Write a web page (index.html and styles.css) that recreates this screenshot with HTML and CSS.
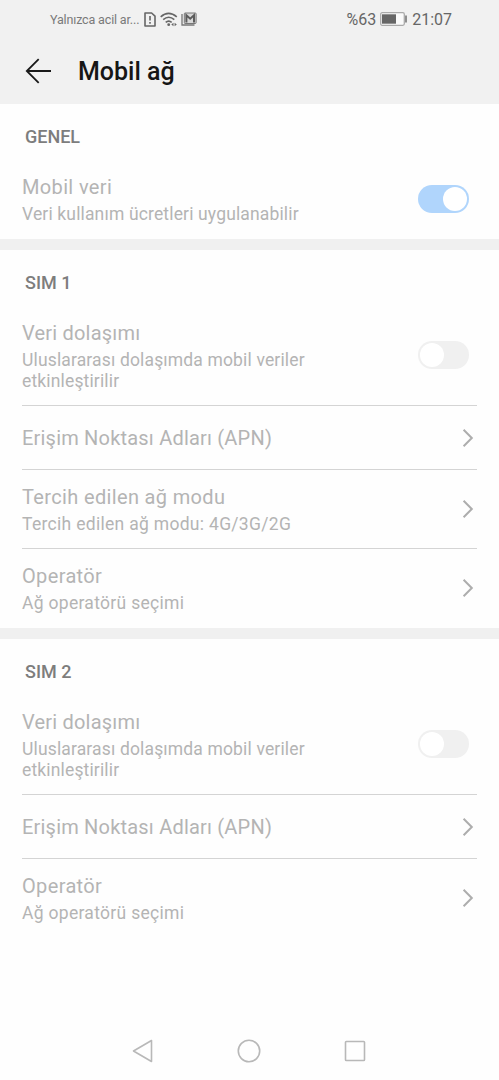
FILE: index.html
```html
<!DOCTYPE html>
<html lang="tr">
<head>
<meta charset="utf-8">
<title>Mobil ağ</title>
<link rel="stylesheet" href="styles.css">
</head>
<body>
<svg class="defs" width="0" height="0"><symbol id="chevron" viewBox="0 0 12 20"><path d="M1.600 1.800 9.800 10 1.600 18.200" fill="none" stroke="currentColor" stroke-width="2"/></symbol></svg>
<div class="screen">
  <header class="top">
    <div class="status">
      <span class="carrier">Yalnızca acil ar...</span>
      <svg class="sim" width="12" height="15" viewBox="0 0 12 15"><path d="M1 1h6.600L11 4.200V14H1z" fill="none" stroke="#666" stroke-width="1.600" stroke-linejoin="round"/><path d="M6 4v4.600M6 10v1.700" stroke="#666" stroke-width="1.600"/></svg>
      <svg class="wifi" width="18" height="15" viewBox="0 0 18 15"><g fill="none" stroke="#666" stroke-width="1.600"><path d="M.7 4.800Q8.500-2.200 16.800 4.800M3.200 7.700Q8.700 2.800 14.300 7.700M5.700 10.400Q8.700 7.800 11.700 10.400"/></g><circle cx="8.700" cy="12.700" r="1.400" fill="#666"/><path d="M11.300 12.500l2.200-1.700v3.400zM16.800 12.500l-2.200-1.700v3.400z" fill="#666"/></svg>
      <svg class="mail" width="16" height="14" viewBox="0 0 16 14"><path d="M1 2v11h12.500" fill="none" stroke="#777" stroke-width="1.300"/><rect x="3.300" y="1" width="11.800" height="10.500" rx=".8" fill="#d8d8d8" stroke="#777" stroke-width="1"/><path d="M5.400 10.500V3.300l3.800 3.400L13 3.300v7.200" fill="none" stroke="#5c5c5c" stroke-width="2"/></svg>
      <span class="percent">%63</span>
      <svg class="battery" width="28" height="14" viewBox="0 0 28 14"><rect x=".7" y=".7" width="23.600" height="12.600" rx="1.500" fill="#fafafa" stroke="#aaa" stroke-width="1.300"/><path d="M2 2.300h14v9.400H2z" fill="#666"/><path d="M26 3.500v7" stroke="#777" stroke-width="1.600"/></svg>
      <span class="clock">21:07</span>
    </div>
    <div class="bar">
      <svg class="back" width="27" height="26" viewBox="0 0 27 26"><path d="M26 13H2M13.700 1.200 1.800 13l11.900 11.800" fill="none" stroke="#1a1a1a" stroke-width="1.800"/></svg>
      <h1>Mobil ağ</h1>
    </div>
  </header>
  <main>
    <section>
      <h2>GENEL</h2>
      <div class="row"><div class="label"><p class="name wide">Mobil veri</p><p class="note tight">Veri kullanım ücretleri uygulanabilir</p></div><span class="switch on"></span></div>
    </section>
    <section>
      <h2>SIM 1</h2>
      <div class="row"><div class="label"><p class="name">Veri dolaşımı</p><p class="note tight">Uluslararası dolaşımda mobil veriler<br>etkinleştirilir</p></div><span class="switch"></span></div>
      <div class="row single"><div class="label"><p class="name">Erişim Noktası Adları (APN)</p></div><svg class="chev"><use href="#chevron"/></svg></div>
      <div class="row"><div class="label"><p class="name wide">Tercih edilen ağ modu</p><p class="note wide">Tercih edilen ağ modu: 4G/3G/2G</p></div><svg class="chev"><use href="#chevron"/></svg></div>
      <div class="row"><div class="label"><p class="name wide">Operatör</p><p class="note wide">Ağ operatörü seçimi</p></div><svg class="chev"><use href="#chevron"/></svg></div>
    </section>
    <section>
      <h2>SIM 2</h2>
      <div class="row"><div class="label"><p class="name">Veri dolaşımı</p><p class="note tight">Uluslararası dolaşımda mobil veriler<br>etkinleştirilir</p></div><span class="switch"></span></div>
      <div class="row single"><div class="label"><p class="name">Erişim Noktası Adları (APN)</p></div><svg class="chev"><use href="#chevron"/></svg></div>
      <div class="row"><div class="label"><p class="name wide">Operatör</p><p class="note wide">Ağ operatörü seçimi</p></div><svg class="chev"><use href="#chevron"/></svg></div>
    </section>
  </main>
  <nav>
    <svg width="24" height="24" viewBox="0 0 24 24"><path d="M20.500 1.500v21L2.500 12z"/></svg>
    <svg width="24" height="24" viewBox="0 0 24 24"><circle cx="12" cy="12" r="10.700"/></svg>
    <svg width="24" height="24" viewBox="0 0 24 24"><rect x="2.500" y="2.500" width="19" height="19" rx=".8"/></svg>
  </nav>
</div>
</body>
</html>
```
FILE: styles.css
```css
* { box-sizing: border-box; }
body { margin: 0; background: #fefefe; font-family: Roboto, "Noto Sans", sans-serif; }
h1, h2, p { margin: 0; }
.defs { display: block; }
.screen { width: 499px; height: 1080px; display: flex; flex-direction: column; overflow: hidden; }
.top { height: 104px; background: #f1f1f1; }
.status { height: 38px; display: flex; align-items: center; padding: 0 47px 0 50px; color: #666; white-space: nowrap; }
.status svg { flex: none; }
.carrier { font-size: 12.5px; letter-spacing: -.15px; color: #7a7a7a; width: 94px; }
.wifi { margin-left: 4px; }
.mail { margin-left: 3px; }
.percent { margin-left: auto; font-size: 16px; }
.battery { margin: 0 4px; }
.clock { font-size: 16px; }
.bar { height: 66px; display: flex; align-items: center; padding: 0 0 1px 25px; }
h1 { margin: 3px 0 0 26px; font-size: 25px; font-weight: 500; line-height: 30px; color: #161616; }
section + section { border-top: 11px solid #f0f0f0; }
h2 { height: 56px; padding: 9px 0 0 25px; display: flex; align-items: center; font-size: 18px; font-weight: 500; color: #7d7d7d; }
.row { margin: 0 22px; padding: 15px 0 16px; display: flex; align-items: center; justify-content: space-between; border-bottom: 1px solid #d4d4d4; }
.row:last-child { border-bottom: 0; padding-bottom: 17px; }
.single { height: 64px; padding-top: 16px; padding-bottom: 15px; }
.name { font-size: 20px; line-height: 25px; color: #b4b4b4; letter-spacing: .2px; }
.name + .note { padding-top: 4px; margin-bottom: -3px; }
.note { font-size: 17.5px; line-height: 21px; color: #b4b4b4; letter-spacing: .2px; }
.name.wide { letter-spacing: .35px; }
.note.wide { letter-spacing: .3px; }
.note.tight { letter-spacing: .15px; }
.switch { width: 51px; height: 28px; margin-right: 8px; padding: 2px; border-radius: 14px; background: #f0f0f0; display: flex; flex: none; }
.switch::before { content: ""; width: 24px; height: 24px; border-radius: 50%; background: #fff; }
.on { background: #b0d5fc; justify-content: flex-end; }
.chev { width: 12px; height: 20px; flex: none; margin-right: 3px; color: #adadad; }
nav { margin-top: auto; height: 59px; display: flex; justify-content: center; gap: 82px; align-items: center; padding-right: 1px; }
nav svg { fill: none; stroke: #b8b8b8; stroke-width: 1.6; stroke-linejoin: round; }
```
